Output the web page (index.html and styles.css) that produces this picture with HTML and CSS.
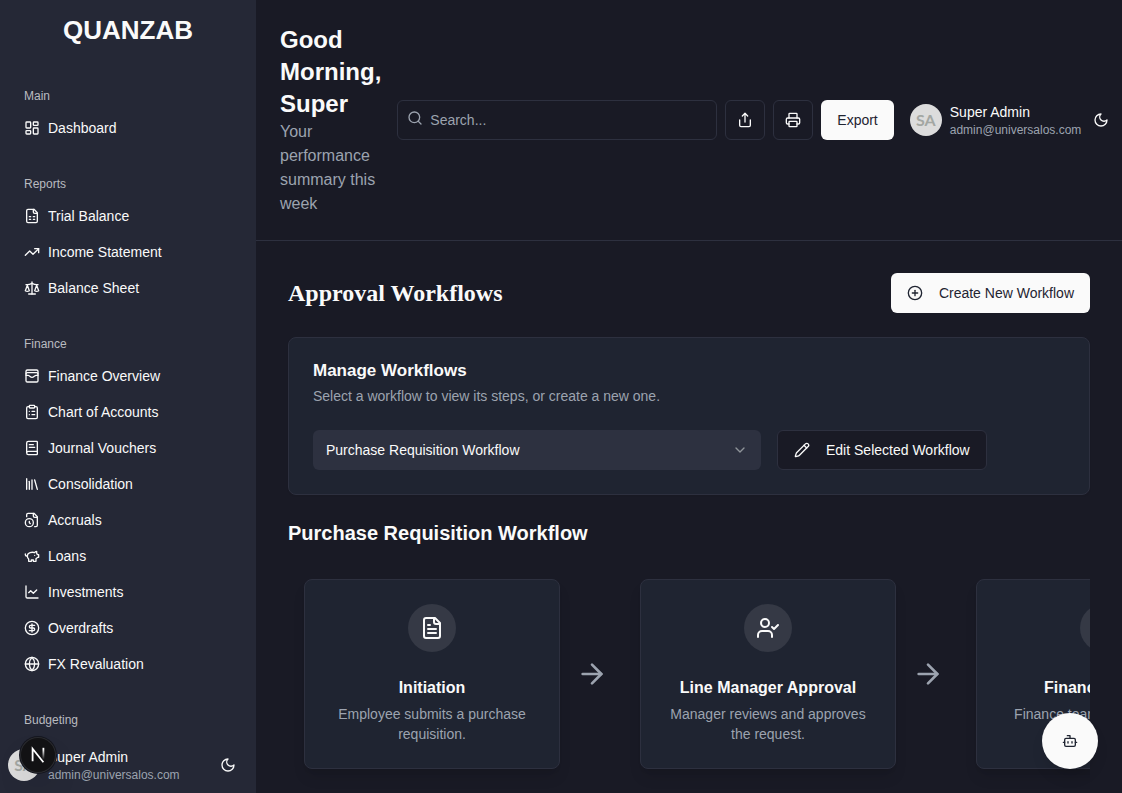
FILE: index.html
```
<!DOCTYPE html>
<html lang="en">
<head>
  <meta charset="UTF-8">
  <meta name="viewport" content="width=device-width, initial-scale=1">
  <title>Approval Workflows - Quanzab</title>
  <link rel="stylesheet" href="styles.css">
</head>
<body>
  <div class="app">
    <!-- Sidebar -->
    <aside class="sidebar">
      <div class="brand">QUANZAB</div>

      <nav class="nav">
        <section class="nav-group">
          <h2 class="nav-label">Main</h2>
          <a class="nav-item" href="#">
            <svg class="icon" viewBox="0 0 24 24"><rect width="7" height="9" x="3" y="3" rx="1"/><rect width="7" height="5" x="14" y="3" rx="1"/><rect width="7" height="9" x="14" y="12" rx="1"/><rect width="7" height="5" x="3" y="16" rx="1"/></svg>
            Dashboard
          </a>
        </section>

        <section class="nav-group">
          <h2 class="nav-label">Reports</h2>
          <a class="nav-item" href="#">
            <svg class="icon" viewBox="0 0 24 24"><path d="M15 2H6a2 2 0 0 0-2 2v16a2 2 0 0 0 2 2h12a2 2 0 0 0 2-2V7Z"/><path d="M14 2v4a2 2 0 0 0 2 2h4"/><path d="M8 13h2"/><path d="M14 13h2"/><path d="M8 17h2"/><path d="M14 17h2"/></svg>
            Trial Balance
          </a>
          <a class="nav-item" href="#">
            <svg class="icon" viewBox="0 0 24 24"><polyline points="22 7 13.5 15.5 8.5 10.5 2 17"/><polyline points="16 7 22 7 22 13"/></svg>
            Income Statement
          </a>
          <a class="nav-item" href="#">
            <svg class="icon" viewBox="0 0 24 24"><path d="m16 16 3-8 3 8c-.87.65-1.92 1-3 1s-2.13-.35-3-1Z"/><path d="m2 16 3-8 3 8c-.87.65-1.92 1-3 1s-2.13-.35-3-1Z"/><path d="M7 21h10"/><path d="M12 3v18"/><path d="M3 7h2c2 0 5-1 7-2 2 1 5 2 7 2h2"/></svg>
            Balance Sheet
          </a>
        </section>

        <section class="nav-group">
          <h2 class="nav-label">Finance</h2>
          <a class="nav-item" href="#">
            <svg class="icon" viewBox="0 0 24 24"><rect width="18" height="18" x="3" y="3" rx="2"/><path d="M3 9a2 2 0 0 1 2-2h14a2 2 0 0 1 2 2"/><path d="M3 11h3c.8 0 1.6.3 2.1.9l1.1.9c1.6 1.6 4.1 1.6 5.7 0l1.1-.9c.5-.5 1.3-.9 2.1-.9H21"/></svg>
            Finance Overview
          </a>
          <a class="nav-item" href="#">
            <svg class="icon" viewBox="0 0 24 24"><rect width="8" height="4" x="8" y="2" rx="1"/><path d="M16 4h2a2 2 0 0 1 2 2v14a2 2 0 0 1-2 2H6a2 2 0 0 1-2-2V6a2 2 0 0 1 2-2h2"/><path d="M12 11h4"/><path d="M12 16h4"/><path d="M8 11h.01"/><path d="M8 16h.01"/></svg>
            Chart of Accounts
          </a>
          <a class="nav-item" href="#">
            <svg class="icon" viewBox="0 0 24 24"><path d="M4 19.5v-15A2.5 2.5 0 0 1 6.5 2H19a1 1 0 0 1 1 1v18a1 1 0 0 1-1 1H6.5a1 1 0 0 1 0-5H20"/><path d="M8 11h8"/><path d="M8 7h6"/></svg>
            Journal Vouchers
          </a>
          <a class="nav-item" href="#">
            <svg class="icon" viewBox="0 0 24 24"><path d="m16 6 4 14"/><path d="M12 6v14"/><path d="M8 8v12"/><path d="M4 4v16"/></svg>
            Consolidation
          </a>
          <a class="nav-item" href="#">
            <svg class="icon" viewBox="0 0 24 24"><path d="M16 22h2a2 2 0 0 0 2-2V7l-5-5H6a2 2 0 0 0-2 2v3"/><path d="M14 2v4a2 2 0 0 0 2 2h4"/><circle cx="8" cy="16" r="6"/><path d="M9.5 17.5 8 16.25V14"/></svg>
            Accruals
          </a>
          <a class="nav-item" href="#">
            <svg class="icon" viewBox="0 0 24 24"><path d="M19 5c-1.5 0-2.8 1.4-3 2-3.5-1.5-11-.3-11 5 0 1.8 0 3 2 4.500V20h4v-2h3v2h4v-4c1-.5 1.700-1 2-2h2v-4h-2c0-1-.5-1.500-1-2V5z"/><path d="M2 9v1c0 1.100.9 2 2 2h1"/><path d="M16 11h.01"/></svg>
            Loans
          </a>
          <a class="nav-item" href="#">
            <svg class="icon" viewBox="0 0 24 24"><path d="M3 3v16a2 2 0 0 0 2 2h16"/><path d="m7 13 3-3 4 4 5-5"/></svg>
            Investments
          </a>
          <a class="nav-item" href="#">
            <svg class="icon" viewBox="0 0 24 24"><circle cx="12" cy="12" r="10"/><path d="M16 8h-6a2 2 0 1 0 0 4h4a2 2 0 1 1 0 4H8"/><path d="M12 18V6"/></svg>
            Overdrafts
          </a>
          <a class="nav-item" href="#">
            <svg class="icon" viewBox="0 0 24 24"><circle cx="12" cy="12" r="10"/><path d="M12 2a14.5 14.5 0 0 0 0 20 14.5 14.5 0 0 0 0-20"/><path d="M2 12h20"/></svg>
            FX Revaluation
          </a>
        </section>

        <section class="nav-group">
          <h2 class="nav-label">Budgeting</h2>
        </section>
      </nav>

      <div class="sidebar-footer">
        <div class="user">
          <span class="avatar">SA</span>
          <div class="user-text">
            <div class="user-name">Super Admin</div>
            <div class="user-email">admin@universalos.com</div>
          </div>
        </div>
        <button class="btn-ghost" type="button" aria-label="Toggle theme">
          <svg class="icon" viewBox="0 0 24 24"><path d="M12 3a6 6 0 0 0 9 9 9 9 0 1 1-9-9Z"/></svg>
        </button>
      </div>
    </aside>

    <!-- Page -->
    <div class="page">
      <header class="topbar">
        <div class="greeting">
          <h1 class="greeting-title">Good Morning, Super</h1>
          <p class="greeting-text">Your performance summary this week</p>
        </div>
        <div class="toolbar">
          <div class="search">
            <svg class="icon search-icon" viewBox="0 0 24 24"><circle cx="11" cy="11" r="8"/><path d="m21 21-4.300-4.300"/></svg>
            <input class="search-input" type="search" placeholder="Search..." aria-label="Search">
          </div>
          <button class="btn btn-outline btn-icon" type="button" aria-label="Share">
            <svg class="icon" viewBox="0 0 24 24"><path d="M4 12v8a2 2 0 0 0 2 2h12a2 2 0 0 0 2-2v-8"/><polyline points="16 6 12 2 8 6"/><path d="M12 2v13"/></svg>
          </button>
          <button class="btn btn-outline btn-icon" type="button" aria-label="Print">
            <svg class="icon" viewBox="0 0 24 24"><path d="M6 18H4a2 2 0 0 1-2-2v-5a2 2 0 0 1 2-2h16a2 2 0 0 1 2 2v5a2 2 0 0 1-2 2h-2"/><path d="M6 9V3a1 1 0 0 1 1-1h10a1 1 0 0 1 1 1v6"/><rect x="6" y="14" width="12" height="8" rx="1"/></svg>
          </button>
          <button class="btn btn-primary" type="button">Export</button>
        </div>
        <div class="account">
          <div class="user">
            <span class="avatar">SA</span>
            <div class="user-text">
              <div class="user-name">Super Admin</div>
              <div class="user-email">admin@universalos.com</div>
            </div>
          </div>
          <button class="btn-ghost" type="button" aria-label="Toggle theme">
            <svg class="icon" viewBox="0 0 24 24"><path d="M12 3a6 6 0 0 0 9 9 9 9 0 1 1-9-9Z"/></svg>
          </button>
        </div>
      </header>

      <main class="content">
        <div class="content-head">
          <h2 class="content-title">Approval Workflows</h2>
          <button class="btn btn-primary btn-with-icon" type="button">
            <svg class="icon" viewBox="0 0 24 24"><circle cx="12" cy="12" r="10"/><path d="M8 12h8"/><path d="M12 8v8"/></svg>
            Create New Workflow
          </button>
        </div>

        <section class="card manage">
          <h3 class="manage-title">Manage Workflows</h3>
          <p class="manage-text">Select a workflow to view its steps, or create a new one.</p>
          <div class="manage-row">
            <div class="select-wrap">
              <select class="select" aria-label="Workflow">
                <option>Purchase Requisition Workflow</option>
              </select>
              <svg class="icon select-arrow" viewBox="0 0 24 24"><path d="m6 9 6 6 6-6"/></svg>
            </div>
            <button class="btn btn-outline btn-with-icon" type="button">
              <svg class="icon" viewBox="0 0 24 24"><path d="M21.174 6.812a1 1 0 0 0-3.986-3.987L3.842 16.174a2 2 0 0 0-.5.83l-1.321 4.352a.5.5 0 0 0 .623.622l4.353-1.320a2 2 0 0 0 .83-.497z"/><path d="m15 5 4 4"/></svg>
              Edit Selected Workflow
            </button>
          </div>
        </section>

        <section class="workflow">
          <h3 class="workflow-title">Purchase Requisition Workflow</h3>
          <div class="steps">
            <article class="card step">
              <div class="step-icon">
                <svg class="icon icon-lg" viewBox="0 0 24 24"><path d="M15 2H6a2 2 0 0 0-2 2v16a2 2 0 0 0 2 2h12a2 2 0 0 0 2-2V7Z"/><path d="M14 2v4a2 2 0 0 0 2 2h4"/><path d="M10 9H8"/><path d="M16 13H8"/><path d="M16 17H8"/></svg>
              </div>
              <h4 class="step-title">Initiation</h4>
              <p class="step-text">Employee submits a purchase requisition.</p>
            </article>
            <svg class="icon step-arrow" viewBox="0 0 24 24"><path d="M5 12h14"/><path d="m12 5 7 7-7 7"/></svg>
            <article class="card step">
              <div class="step-icon">
                <svg class="icon icon-lg" viewBox="0 0 24 24"><path d="m16 11 2 2 4-4"/><path d="M16 21v-2a4 4 0 0 0-4-4H6a4 4 0 0 0-4 4v2"/><circle cx="9" cy="7" r="4"/></svg>
              </div>
              <h4 class="step-title">Line Manager Approval</h4>
              <p class="step-text">Manager reviews and approves the request.</p>
            </article>
            <svg class="icon step-arrow" viewBox="0 0 24 24"><path d="M5 12h14"/><path d="m12 5 7 7-7 7"/></svg>
            <article class="card step">
              <div class="step-icon">
                <svg class="icon icon-lg" viewBox="0 0 24 24"><rect width="20" height="12" x="2" y="6" rx="2"/><circle cx="12" cy="12" r="2"/><path d="M6 12h.01M18 12h.01"/></svg>
              </div>
              <h4 class="step-title">Finance Review</h4>
              <p class="step-text">Finance team verifies budget allocation.</p>
            </article>
          </div>
        </section>
      </main>
    </div>
  </div>

  <!-- Floating buttons -->
  <button class="dev-badge" type="button" aria-label="Open dev tools">
    <svg class="dev-logo" viewBox="0 0 40 40">
      <defs>
        <linearGradient id="fadeDown" x1="0" y1="14" x2="0" y2="25" gradientUnits="userSpaceOnUse"><stop offset="0" stop-color="#fff"/><stop offset="1" stop-color="#fff" stop-opacity="0"/></linearGradient>
      </defs>
      <path d="M14 27V13L26 28" fill="none" stroke="#fff" stroke-width="2"/>
      <path d="M26 12v13" fill="none" stroke="url(#fadeDown)" stroke-width="2"/>
    </svg>
  </button>
  <button class="chat-btn" type="button" aria-label="Open assistant">
    <svg class="icon" viewBox="0 0 24 24"><path d="M12 8V4H8"/><rect width="16" height="12" x="4" y="8" rx="2"/><path d="M2 14h2"/><path d="M20 14h2"/><path d="M15 13v2"/><path d="M9 13v2"/></svg>
  </button>
</body>
</html>
```
FILE: styles.css
```
* {
  box-sizing: border-box;
}
body {
  margin: 0;
  font-family: "Liberation Sans", Arial, sans-serif;
  font-size: 14px;
  line-height: 20px;
  color: #fafafa;
  background-color: #191a25;
}
h1, h2, h3, h4, p {
  margin: 0;
}
button, input, select {
  font: inherit;
  color: inherit;
}
button {
  cursor: pointer;
}
.app {
  display: flex;
  height: 100vh;
  overflow: hidden;
}
.icon {
  width: 16px;
  height: 16px;
  flex-shrink: 0;
  fill: none;
  stroke: currentColor;
  stroke-width: 2;
  stroke-linecap: round;
  stroke-linejoin: round;
}
.icon-lg {
  width: 24px;
  height: 24px;
}

/* Sidebar */
.sidebar {
  display: flex;
  flex-direction: column;
  width: 256px;
  flex-shrink: 0;
  background-color: #252836;
}
.brand {
  padding: 14px 8px 26px;
  font-size: 26px;
  line-height: 32px;
  font-weight: bold;
  text-align: center;
}
.nav {
  display: flex;
  flex-direction: column;
  gap: 8px;
  flex: 1;
  min-height: 0;
  overflow: hidden;
}
.nav-group {
  display: flex;
  flex-direction: column;
  padding: 8px 16px;
}
.nav-label {
  padding: 8px;
  font-size: 12px;
  line-height: 16px;
  font-weight: normal;
  color: #b9bbc0;
}
.nav-item {
  display: flex;
  align-items: center;
  gap: 8px;
  height: 32px;
  padding: 0 8px;
  color: inherit;
  text-decoration: none;
}
.nav-item + .nav-item {
  margin-top: 4px;
}
.sidebar-footer {
  display: flex;
  align-items: center;
  justify-content: space-between;
  padding: 8px;
}

/* User block, used in the sidebar and the top bar */
.user {
  display: flex;
  align-items: center;
  gap: 8px;
}
.avatar {
  display: flex;
  align-items: center;
  justify-content: center;
  width: 32px;
  height: 32px;
  border-radius: 50%;
  font-family: Lato, "Liberation Sans", sans-serif;
  font-size: 16px;
  font-weight: bold;
  color: #a3a7a3;
  background-color: #dcdcdc;
}
.user-email {
  font-size: 12px;
  line-height: 16px;
  color: #9ca3af;
}
.btn-ghost {
  display: flex;
  align-items: center;
  justify-content: center;
  width: 40px;
  height: 40px;
  padding: 0;
  border: none;
  background: none;
}

/* Top bar */
.page {
  display: flex;
  flex-direction: column;
  flex: 1;
  min-width: 0;
}
.topbar {
  display: flex;
  align-items: center;
  gap: 16px;
  padding: 24px 1px 24px 24px;
  border-bottom: 1px solid #2d303f;
}
.greeting {
  flex: 1 1 0;
}
.greeting-title {
  font-size: 24px;
  line-height: 32px;
}
.greeting-text {
  font-size: 16px;
  line-height: 24px;
  color: #9ca3af;
}
.toolbar {
  display: flex;
  gap: 8px;
}
.search {
  position: relative;
  width: 320px;
}
.search-icon {
  position: absolute;
  left: 10px;
  top: 10px;
  color: #9ca3af;
}
.search-input {
  width: 100%;
  height: 40px;
  padding: 0 12px 0 32px;
  border: 1px solid #2d303f;
  border-radius: 6px;
  background-color: #191a25;
  appearance: none;
}
.search-input::placeholder {
  color: #9ca3af;
}
.account {
  display: flex;
  align-items: center;
}

/* Buttons */
.btn {
  display: flex;
  align-items: center;
  justify-content: center;
  height: 40px;
  padding: 0 16px;
  border: none;
  border-radius: 6px;
  white-space: nowrap;
}
.btn-primary {
  color: #1f2431;
  background-color: #fafafa;
}
.btn-outline {
  border: 1px solid #2d303f;
  background-color: #191a25;
}
.btn-icon {
  width: 40px;
  padding: 0;
}
.btn-with-icon {
  gap: 16px;
}

/* Content */
.content {
  display: flex;
  flex-direction: column;
  gap: 24px;
  padding: 32px;
}
.content-head {
  display: flex;
  align-items: center;
  justify-content: space-between;
}
.content-title {
  font-family: "Liberation Serif", "Times New Roman", serif;
  font-size: 24px;
  line-height: 32px;
}
.card {
  padding: 24px;
  border: 1px solid #2d303f;
  border-radius: 8px;
  background-color: #1f2431;
}
.manage {
  box-shadow: 0 1px 2px rgba(0, 0, 0, 0.05);
}
.manage-title {
  font-size: 17px;
  line-height: 18px;
}
.manage-text {
  margin-top: 6px;
  color: #9ca3af;
}
.manage-row {
  display: flex;
  gap: 16px;
  margin-top: 24px;
}
.select-wrap {
  position: relative;
  flex: 0 1 448px;
}
.select {
  width: 100%;
  height: 40px;
  padding: 0 36px 0 13px;
  border: none;
  border-radius: 6px;
  background-color: #2d3140;
  appearance: none;
}
.select-arrow {
  position: absolute;
  right: 13px;
  top: 12px;
  color: #8f9499;
  pointer-events: none;
}

/* Workflow steps */
.workflow-title {
  font-size: 20px;
  line-height: 28px;
}
.steps {
  display: flex;
  align-items: center;
  gap: 16px;
  margin-top: 16px;
  padding: 16px 16px 32px;
  overflow-x: auto;
  scrollbar-width: none;
}
.step {
  width: 256px;
  flex-shrink: 0;
  text-align: center;
  box-shadow: 0 10px 15px -3px rgba(0, 0, 0, 0.1), 0 4px 6px -4px rgba(0, 0, 0, 0.1);
}
.step-icon {
  display: flex;
  align-items: center;
  justify-content: center;
  width: 48px;
  height: 48px;
  margin: 0 auto 24px;
  border-radius: 50%;
  background-color: #353945;
}
.step-title {
  font-size: 16px;
  line-height: 24px;
}
.step-text {
  margin-top: 4px;
  color: #9ca3af;
}
.step-arrow {
  width: 32px;
  height: 32px;
  margin-right: 16px;
  color: #9ca3af;
}

/* Floating buttons */
.dev-badge {
  position: fixed;
  left: 20px;
  bottom: 20px;
  width: 36px;
  height: 36px;
  padding: 0;
  border: none;
  border-radius: 50%;
  background-color: #121214;
  box-shadow: 0 0 0 1px #14161f, inset 0 0 0 1px #2a2b30, 0 16px 32px -8px rgba(0, 0, 0, 0.24);
}
.dev-logo {
  display: block;
  width: 36px;
  height: 36px;
}
.chat-btn {
  position: fixed;
  right: 24px;
  bottom: 24px;
  display: flex;
  align-items: center;
  justify-content: center;
  width: 56px;
  height: 56px;
  padding: 0;
  border: none;
  border-radius: 50%;
  color: #1f2431;
  background-color: #fafafa;
  box-shadow: 0 10px 15px -3px rgba(0, 0, 0, 0.1), 0 4px 6px -4px rgba(0, 0, 0, 0.1);
}
```
